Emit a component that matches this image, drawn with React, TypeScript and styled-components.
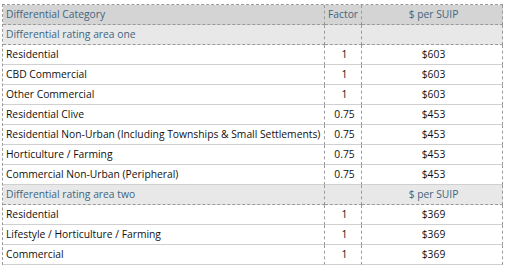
import React from "react";
import styled, { createGlobalStyle } from "styled-components";

const GlobalStyle = createGlobalStyle`
  body {
    margin: 0;
    padding: 4px 0 0 2px;
    background: #fff;
    font-family: "Open Sans", "Liberation Sans", sans-serif;
  }
`;

type Kind = "head" | "section" | "data";

const rows: { kind: Kind; cells: [string, string, string] }[] = [
  { kind: "head", cells: ["Differential Category", "Factor", "$ per SUIP"] },
  { kind: "section", cells: ["Differential rating area one", "", ""] },
  { kind: "data", cells: ["Residential", "1", "$603"] },
  { kind: "data", cells: ["CBD Commercial", "1", "$603"] },
  { kind: "data", cells: ["Other Commercial", "1", "$603"] },
  { kind: "data", cells: ["Residential Clive", "0.75", "$453"] },
  {
    kind: "data",
    cells: ["Residential Non-Urban (Including Townships & Small Settlements)", "0.75", "$453"],
  },
  { kind: "data", cells: ["Horticulture / Farming", "0.75", "$453"] },
  { kind: "data", cells: ["Commercial Non-Urban (Peripheral)", "0.75", "$453"] },
  { kind: "section", cells: ["Differential rating area two", "", "$ per SUIP"] },
  { kind: "data", cells: ["Residential", "1", "$369"] },
  { kind: "data", cells: ["Lifestyle / Horticulture / Farming", "1", "$369"] },
  { kind: "data", cells: ["Commercial", "1", "$369"] },
];

function App() {
  return (
    <>
      <GlobalStyle />
      <Table>
        <colgroup>
          <Col $w={322} />
          <Col $w={37} />
          <Col $w={141} />
        </colgroup>
        <tbody>
          {rows.map((r, i) => (
            <Row key={i} $kind={r.kind}>
              <Cell $kind={r.kind}>{r.cells[0]}</Cell>
              <Cell $kind={r.kind} $align={r.kind === "head" ? "left" : "center"}>
                {r.cells[1]}
              </Cell>
              <Cell $kind={r.kind} $align="center">
                {r.cells[2]}
              </Cell>
            </Row>
          ))}
        </tbody>
      </Table>
    </>
  );
}

export default App;

const Table = styled.table`
  border-collapse: separate;
  border-spacing: 0;
  table-layout: fixed;
  width: 501px;
  border-top: 1px dashed #9a9a9a;
  border-left: 1px dashed #9a9a9a;
`;

const Col = styled.col<{ $w: number }>`
  width: ${(p) => p.$w}px;
`;

const Row = styled.tr<{ $kind: Kind }>`
  height: 20px;
  background: ${(p) =>
    p.$kind === "head" ? "#d4d4d4" : p.$kind === "section" ? "#e8e8e8" : "#fff"};
`;

const Cell = styled.td<{ $kind: Kind; $align?: "left" | "center" }>`
  padding: 0 0 0 3px;
  height: 19px;
  font-size: 10.3px;
  line-height: 19px;
  white-space: nowrap;
  overflow: hidden;
  text-align: ${(p) => p.$align ?? "left"};
  color: ${(p) => (p.$kind === "data" ? "#111" : "#41657f")};
  border-right: 1px dashed #9a9a9a;
  border-bottom: ${(p) =>
    p.$kind === "data" ? "1px solid #d0d0d0" : "1px dashed #9a9a9a"};
`;
